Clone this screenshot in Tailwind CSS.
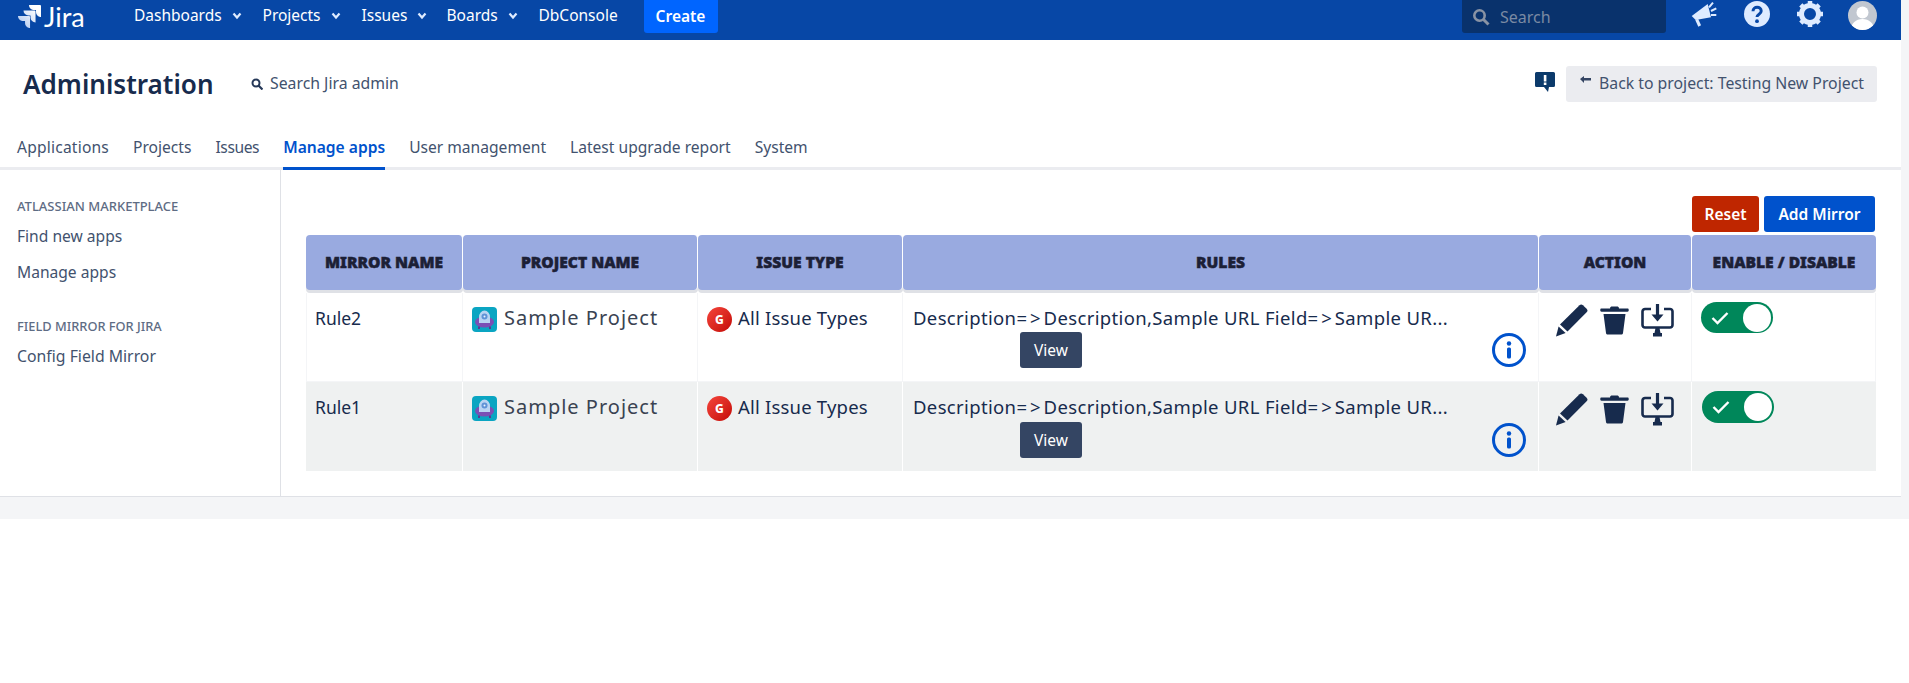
<!DOCTYPE html>
<html lang="en">
<head>
<meta charset="utf-8">
<title>Field Mirror</title>
<script src="https://cdn.jsdelivr.net/npm/@tailwindcss/browser@4"></script>
</head>
<body class="bg-white font-['Noto_Sans',sans-serif] text-[#172b4d]">
<div class="h-[519px] bg-[#f4f5f7]">
<div class="w-[1901px]">
  <header class="h-10 bg-[#0747a6] flex items-start text-white">
    <div class="flex items-center h-[32px] pl-[18px] w-[134px] gap-[3px] mt-0">
      <svg class="w-[23px] h-[23px] shrink-0" viewBox="2 2 20 20"><defs><linearGradient id="jg" x1="1" y1="0" x2="0" y2="1"><stop offset="0.2" stop-color="#fff"/><stop offset="1" stop-color="#a9c3ee"/></linearGradient></defs><path fill="url(#jg)" d="M11.53 2c0 2.4 1.97 4.35 4.35 4.35h1.78v1.7c0 2.4 1.94 4.34 4.34 4.34V2.84a.84.84 0 0 0-.84-.84H11.53zM6.77 6.8a4.36 4.36 0 0 0 4.34 4.34h1.8v1.72a4.36 4.36 0 0 0 4.34 4.34V7.63a.84.84 0 0 0-.84-.84H6.77zM2 11.6c0 2.4 1.95 4.34 4.35 4.34h1.78v1.72c.01 2.39 1.95 4.34 4.35 4.34v-9.57a.84.84 0 0 0-.84-.84H2z"/></svg>
      <span class="text-[27px] leading-none font-['Lato',sans-serif] font-normal">Jira</span>
    </div>
    <nav class="flex items-center h-[32px] text-[15.5px]">
      <span class="flex items-center w-[128.5px]">Dashboards<svg class="w-[10px] h-[8px] ml-[10px]" viewBox="0 0 10 8"><path d="M1.5 1.5 5 5.5l3.5-4" fill="none" stroke="#deebff" stroke-width="2.2"/></svg></span>
      <span class="flex items-center w-[99px]">Projects<svg class="w-[10px] h-[8px] ml-[10px]" viewBox="0 0 10 8"><path d="M1.5 1.5 5 5.5l3.5-4" fill="none" stroke="#deebff" stroke-width="2.2"/></svg></span>
      <span class="flex items-center w-[85px]">Issues<svg class="w-[10px] h-[8px] ml-[10px]" viewBox="0 0 10 8"><path d="M1.5 1.5 5 5.5l3.5-4" fill="none" stroke="#deebff" stroke-width="2.2"/></svg></span>
      <span class="flex items-center w-[92px]">Boards<svg class="w-[10px] h-[8px] ml-[10px]" viewBox="0 0 10 8"><path d="M1.5 1.5 5 5.5l3.5-4" fill="none" stroke="#deebff" stroke-width="2.2"/></svg></span>
      <span class="w-[105px]">DbConsole</span>
    </nav>
    <div class="h-[33px] w-[74px] bg-[#0065ff] rounded-b-[3px] flex items-center justify-center font-semibold text-[15.5px]">Create</div>
    <div class="ml-auto flex items-start">
      <div class="w-[204px] h-[33px] bg-[#09326c] rounded-b-[3px] flex items-center pl-[10px] gap-[10px] text-[16px] text-[#7a8aa3]">
        <svg class="w-[18px] h-[18px]" viewBox="0 0 18 18"><circle cx="7.5" cy="7.5" r="5.2" fill="none" stroke="#8993a4" stroke-width="2.6"/><path d="m11.5 11.5 5 5" stroke="#8993a4" stroke-width="3"/></svg>
        Search
      </div>
      <svg class="w-[26px] h-[26px] ml-[25px] mt-[2px]" viewBox="0 0 26 26" fill="#deebff"><path d="M.7 14 16.700 2 20 15.300 4.700 18z"/><path d="m5.700 17.500 3 6.500" stroke="#deebff" stroke-width="3"/><path d="m18 5.300 4-4.600M20 9l5.300-2.700M20 13h5.300" stroke="#deebff" stroke-width="2"/></svg>
      <svg class="w-[26px] h-[26px] ml-[27px] mt-[1px]" viewBox="0 0 26 26"><circle cx="13" cy="13" r="13" fill="#deebff"/><path d="M9 10.2c0-5.2 8.200-5.200 8.200-.2 0 3.300-4.200 3-4.200 6" fill="none" stroke="#0747a6" stroke-width="3"/><circle cx="13" cy="20.200" r="1.900" fill="#0747a6"/></svg>
      <svg class="w-[28px] h-[28px] ml-[26px]" viewBox="0 0 28 28"><circle cx="14" cy="14" r="8.500" fill="none" stroke="#deebff" stroke-width="5"/><g stroke="#deebff" stroke-width="4.500"><path d="M14 1v5M14 22v5M1 14h5M22 14h5M4.800 4.800l3.500 3.500M19.700 19.700l3.500 3.500M4.800 23.200l3.500-3.500M19.700 8.300l3.500-3.500"/></g></svg>
      <svg class="w-[29px] h-[29px] ml-[24px] mr-[24px] mt-[1px]" viewBox="0 0 29 29"><defs><clipPath id="av"><circle cx="14.500" cy="14.500" r="14.500"/></clipPath></defs><circle cx="14.500" cy="14.500" r="14.500" fill="#c1c7d0"/><g clip-path="url(#av)" fill="#fff"><circle cx="14.500" cy="11.500" r="6"/><path d="M3 29c0-7 5-11 11.500-11S26 22 26 29z"/></g></svg>
    </div>
  </header>

  <section class="bg-white h-[127px] flex flex-col">
    <div class="flex items-center h-[87px] pl-[23px] pr-[24px]">
      <h1 class="text-[26.1px] font-semibold leading-none w-[228px] pt-px">Administration</h1>
      <svg class="w-[12px] h-[12px] mr-[7px]" viewBox="0 0 12 12"><circle cx="5" cy="5" r="3.500" fill="none" stroke="#253858" stroke-width="2"/><path d="m7.500 7.500 4 4" stroke="#253858" stroke-width="2.200"/></svg>
      <span class="text-[15.8px] text-[#42526e]">Search Jira admin</span>
      <svg class="ml-auto w-[20px] h-[20px] mr-[11px] mb-[4px]" viewBox="0 0 20 20"><path fill="#0b3a6b" d="M1.500 0h17A1.500 1.500 0 0 1 20 1.500v12a1.500 1.500 0 0 1-1.500 1.500H14l-1 5-4-5H1.500A1.500 1.500 0 0 1 0 13.500v-12A1.500 1.500 0 0 1 1.500 0z"/><rect x="8.800" y="3" width="2.600" height="6.500" fill="#fff"/><rect x="8.800" y="10.500" width="2.600" height="2.500" fill="#fff"/></svg>
      <div class="h-[36px] w-[311px] bg-[#ebecf0] rounded-[3px] flex items-center pl-[14px] gap-[8px] text-[#42526e] text-[15.8px]">
        <svg class="w-[11px] h-[8px] -mt-[8px]" viewBox="0 0 11 8"><path d="M0 3 4 0v2h7v2.500H4V7z" fill="#344563"/></svg>
        Back to project: Testing New Project
      </div>
    </div>
    <nav class="flex pl-[17px] gap-[24px] text-[15.6px] text-[#42526e] h-[40px] items-center pt-px">
      <span class="tracking-[0.2px]">Applications</span><span>Projects</span><span class="tracking-[-0.4px]">Issues</span><span class="font-semibold text-[#0052cc] relative after:absolute after:left-0 after:right-0 after:top-[31px] after:h-[3px] after:bg-[#0052cc]">Manage apps</span><span>User management</span><span>Latest upgrade report</span><span>System</span>
    </nav>
  </section>
  <div class="h-[3px] bg-[#ebecf0]"></div>

  <main class="flex h-[327px] bg-white border-b border-[#dfe1e6]">
    <aside class="w-[281px] shrink-0 border-r border-[#dfe1e6] pl-[17px] pt-[27px] text-[#42526e]">
      <h4 class="text-[13px] font-medium leading-[18px] text-[#5e6c84]">ATLASSIAN MARKETPLACE</h4>
      <p class="text-[15.6px] leading-[36px] mt-[3px]">Find new apps</p>
      <p class="text-[15.6px] leading-[36px]">Manage apps</p>
      <h4 class="text-[12.8px] font-medium leading-[18px] text-[#5e6c84] mt-[27px]">FIELD MIRROR FOR JIRA</h4>
      <p class="text-[15.8px] leading-[36px] mt-[3px]">Config Field Mirror</p>
    </aside>
    <div class="pl-[25px] pt-[26px]">
      <div class="flex justify-end gap-[5px] w-[1570px] pr-px h-[39px] text-white font-semibold text-[15.5px]">
        <button class="w-[67px] h-[36px] bg-[#bf2600] rounded-[3px] pt-px">Reset</button>
        <button class="w-[111px] h-[36px] bg-[#0052cc] rounded-[3px] pt-px">Add Mirror</button>
      </div>
      <div class="grid grid-cols-[157px_235px_205px_636px_153px_184px] w-[1570px]">
        <div class="h-[55px] mb-[3px] bg-[#99aae0] rounded-[4px] border-r border-white shadow-[0_3px_0_#dfe1e6] flex items-center justify-center font-black text-[15.6px] text-[#1c2036] [-webkit-text-stroke:0.5px_#1c2036]">MIRROR NAME</div>
        <div class="h-[55px] mb-[3px] bg-[#99aae0] rounded-[4px] border-r border-white shadow-[0_3px_0_#dfe1e6] flex items-center justify-center font-black text-[15.6px] text-[#1c2036] [-webkit-text-stroke:0.5px_#1c2036]">PROJECT NAME</div>
        <div class="h-[55px] mb-[3px] bg-[#99aae0] rounded-[4px] border-r border-white shadow-[0_3px_0_#dfe1e6] flex items-center justify-center font-black text-[15.6px] text-[#1c2036] [-webkit-text-stroke:0.5px_#1c2036]">ISSUE TYPE</div>
        <div class="h-[55px] mb-[3px] bg-[#99aae0] rounded-[4px] border-r border-white shadow-[0_3px_0_#dfe1e6] flex items-center justify-center font-black text-[15.6px] text-[#1c2036] [-webkit-text-stroke:0.5px_#1c2036]">RULES</div>
        <div class="h-[55px] mb-[3px] bg-[#99aae0] rounded-[4px] border-r border-white shadow-[0_3px_0_#dfe1e6] flex items-center justify-center font-black text-[15.6px] text-[#1c2036] [-webkit-text-stroke:0.5px_#1c2036]">ACTION</div>
        <div class="h-[55px] mb-[3px] bg-[#99aae0] rounded-[4px] shadow-[0_3px_0_#dfe1e6] flex items-center justify-center font-black text-[15.6px] text-[#1c2036] [-webkit-text-stroke:0.5px_#1c2036]">ENABLE / DISABLE</div>

        <!-- row 1 -->
        <div class="h-[89px] border-x border-[#f4f5f7] border-b pl-[8px] pt-[12px] text-[17.5px] leading-[26px]">Rule2</div>
        <div class="h-[89px] border-r border-b border-[#f4f5f7] pl-[9px] pt-[14px] flex items-start gap-[7px] text-[20px] leading-[21px] tracking-[1px] text-[#3a4352]">
          <svg class="w-[25px] h-[25px] shrink-0" viewBox="0 0 25 25"><rect width="25" height="25" rx="4" fill="#0aa5c2"/><ellipse cx="12.500" cy="15" rx="9.500" ry="5.500" fill="#7b4fb5"/><path d="M7 19.500v2.500M18 19.500v2.500" stroke="#5a3a96" stroke-width="2"/><path d="M7 10a5.500 6.500 0 0 1 11 0v6H7z" fill="#b9d4f2"/><circle cx="12.500" cy="9.500" r="3" fill="#5f93d6"/><circle cx="12.500" cy="9.500" r="1" fill="#e8f2ff"/></svg>
          Sample Project
        </div>
        <div class="h-[89px] border-r border-b border-[#f4f5f7] pl-[9px] pt-[14px] flex items-start gap-[6px] text-[18.5px] leading-[21px] tracking-[0.2px]">
          <div class="w-[25px] h-[25px] shrink-0 rounded-full bg-linear-to-br from-[#f5433a] to-[#c40000] flex items-center justify-center text-white text-[12px] font-extrabold">G</div>
          All Issue Types
        </div>
        <div class="h-[89px] border-r border-b border-[#f4f5f7] pl-[10px] pt-[12px] pr-[12px] text-[18.5px] leading-[26px] tracking-[0.35px] flex flex-col">
          <p>Description<span class="tracking-[3px]">=&gt;</span>Description,Sample URL Field<span class="tracking-[3px]">=&gt;</span>Sample UR...</p>
          <div class="flex items-center justify-between pl-[107px] mt-px">
            <button class="w-[62px] h-[36px] bg-[#344563] rounded-[3px] text-white text-[15.5px] tracking-normal">View</button>
            <svg class="w-[34px] h-[34px]" viewBox="0 0 34 34"><circle cx="17" cy="17" r="15.500" fill="none" stroke="#0052cc" stroke-width="3"/><circle cx="17" cy="10.500" r="2.200" fill="#0052cc"/><rect x="15" y="14.500" width="4" height="11" rx="1.500" fill="#0052cc"/></svg>
          </div>
        </div>
        <div class="h-[89px] border-r border-b border-[#f4f5f7] pl-[16px] pt-[11px] flex items-start">
          <svg class="w-[33px] h-[33px] shrink-0" viewBox="0 0 33 33"><path fill="#172b4d" d="M24.500 1.200a2.500 2.500 0 0 1 3.400 0l3.700 3.500a2.500 2.500 0 0 1 0 3.500L12.500 27.500 5 20.500z"/><path fill="#172b4d" d="M3.600 22.500 10.600 29 1 32.500z"/></svg>
          <svg class="w-[29px] h-[29px] shrink-0 ml-[12px] mt-[2px]" viewBox="0 0 29 29"><path fill="#172b4d" d="M10 2.500c0-1.500 1-2 2-2h5c1 0 2 .5 2 2h8.500c.8 0 1.200.5 1.200 1.200v.8c0 .7-.4 1.200-1.200 1.200H1.500C.7 5.700.3 5.200.3 4.500v-.8c0-.7.4-1.200 1.200-1.200z"/><path fill="#172b4d" d="M3.500 8h22L23 27c-.1 1-1 1.500-1.800 1.500H7.800C7 28.500 6.100 28 6 27z"/></svg>
          <svg class="w-[33px] h-[33px] shrink-0 ml-[12px]" viewBox="0 0 33 33" fill="none"><path d="M10 5H4a2.500 2.500 0 0 0-2.500 2.500V21A2.500 2.500 0 0 0 4 23.500h25a2.500 2.500 0 0 0 2.500-2.500V7.500A2.500 2.500 0 0 0 29 5h-6" stroke="#172b4d" stroke-width="2.600"/><path d="M16.500 0v12" stroke="#172b4d" stroke-width="3.200"/><path d="M10.500 10.500h12l-6 7z" fill="#172b4d"/><path d="M14.500 24h4l1 5h-6zM12 29h9V32.500H12z" fill="#172b4d"/></svg>
        </div>
        <div class="h-[89px] border-r border-b border-[#f4f5f7] pl-[9px] pt-[9px]">
          <div class="w-[72px] h-[31px] rounded-full bg-[#00875a] flex items-center justify-between pl-[10px] pr-[2px]">
            <svg class="w-[18px] h-[14px]" viewBox="0 0 18 14"><path d="m1.500 7 5 5 10-10" fill="none" stroke="#fff" stroke-width="2.400"/></svg>
            <div class="w-[28px] h-[28px] rounded-full bg-white"></div>
          </div>
        </div>

        <!-- row 2 -->
        <div class="h-[89px] bg-[#eff1f1] border-r border-white pl-[9px] pt-[12px] text-[17.5px] leading-[26px]">Rule1</div>
        <div class="h-[89px] bg-[#eff1f1] border-r border-white pl-[9px] pt-[14px] flex items-start gap-[7px] text-[20px] leading-[21px] tracking-[1px] text-[#3a4352]">
          <svg class="w-[25px] h-[25px] shrink-0" viewBox="0 0 25 25"><rect width="25" height="25" rx="4" fill="#0aa5c2"/><ellipse cx="12.500" cy="15" rx="9.500" ry="5.500" fill="#7b4fb5"/><path d="M7 19.500v2.500M18 19.500v2.500" stroke="#5a3a96" stroke-width="2"/><path d="M7 10a5.500 6.500 0 0 1 11 0v6H7z" fill="#b9d4f2"/><circle cx="12.500" cy="9.500" r="3" fill="#5f93d6"/><circle cx="12.500" cy="9.500" r="1" fill="#e8f2ff"/></svg>
          Sample Project
        </div>
        <div class="h-[89px] bg-[#eff1f1] border-r border-white pl-[9px] pt-[14px] flex items-start gap-[6px] text-[18.5px] leading-[21px] tracking-[0.2px]">
          <div class="w-[25px] h-[25px] shrink-0 rounded-full bg-linear-to-br from-[#f5433a] to-[#c40000] flex items-center justify-center text-white text-[12px] font-extrabold">G</div>
          All Issue Types
        </div>
        <div class="h-[89px] bg-[#eff1f1] border-r border-white pl-[10px] pt-[12px] pr-[12px] text-[18.5px] leading-[26px] tracking-[0.35px] flex flex-col">
          <p>Description<span class="tracking-[3px]">=&gt;</span>Description,Sample URL Field<span class="tracking-[3px]">=&gt;</span>Sample UR...</p>
          <div class="flex items-center justify-between pl-[107px] mt-[2px]">
            <button class="w-[62px] h-[36px] bg-[#344563] rounded-[3px] text-white text-[15.5px] tracking-normal">View</button>
            <svg class="w-[34px] h-[34px]" viewBox="0 0 34 34"><circle cx="17" cy="17" r="15.500" fill="none" stroke="#0052cc" stroke-width="3"/><circle cx="17" cy="10.500" r="2.200" fill="#0052cc"/><rect x="15" y="14.500" width="4" height="11" rx="1.500" fill="#0052cc"/></svg>
          </div>
        </div>
        <div class="h-[89px] bg-[#eff1f1] border-r border-white pl-[16px] pt-[11px] flex items-start">
          <svg class="w-[33px] h-[33px] shrink-0" viewBox="0 0 33 33"><path fill="#172b4d" d="M24.500 1.200a2.500 2.500 0 0 1 3.400 0l3.700 3.500a2.500 2.500 0 0 1 0 3.500L12.500 27.500 5 20.500z"/><path fill="#172b4d" d="M3.600 22.500 10.600 29 1 32.500z"/></svg>
          <svg class="w-[29px] h-[29px] shrink-0 ml-[12px] mt-[2px]" viewBox="0 0 29 29"><path fill="#172b4d" d="M10 2.500c0-1.500 1-2 2-2h5c1 0 2 .5 2 2h8.500c.8 0 1.200.5 1.200 1.200v.8c0 .7-.4 1.200-1.200 1.200H1.500C.7 5.700.3 5.200.3 4.500v-.8c0-.7.4-1.200 1.200-1.200z"/><path fill="#172b4d" d="M3.500 8h22L23 27c-.1 1-1 1.500-1.800 1.500H7.800C7 28.500 6.100 28 6 27z"/></svg>
          <svg class="w-[33px] h-[33px] shrink-0 ml-[12px]" viewBox="0 0 33 33" fill="none"><path d="M10 5H4a2.500 2.500 0 0 0-2.500 2.500V21A2.500 2.500 0 0 0 4 23.500h25a2.500 2.500 0 0 0 2.500-2.500V7.500A2.500 2.500 0 0 0 29 5h-6" stroke="#172b4d" stroke-width="2.600"/><path d="M16.500 0v12" stroke="#172b4d" stroke-width="3.200"/><path d="M10.500 10.500h12l-6 7z" fill="#172b4d"/><path d="M14.500 24h4l1 5h-6zM12 29h9V32.500H12z" fill="#172b4d"/></svg>
        </div>
        <div class="h-[89px] bg-[#eff1f1] pl-[10px] pt-[9px]">
          <div class="w-[72px] h-[32px] rounded-full bg-[#00875a] flex items-center justify-between pl-[10px] pr-[2px]">
            <svg class="w-[18px] h-[14px]" viewBox="0 0 18 14"><path d="m1.500 7 5 5 10-10" fill="none" stroke="#fff" stroke-width="2.400"/></svg>
            <div class="w-[28px] h-[28px] rounded-full bg-white"></div>
          </div>
        </div>
      </div>
    </div>
  </main>
</div>
</div>
</body>
</html>
